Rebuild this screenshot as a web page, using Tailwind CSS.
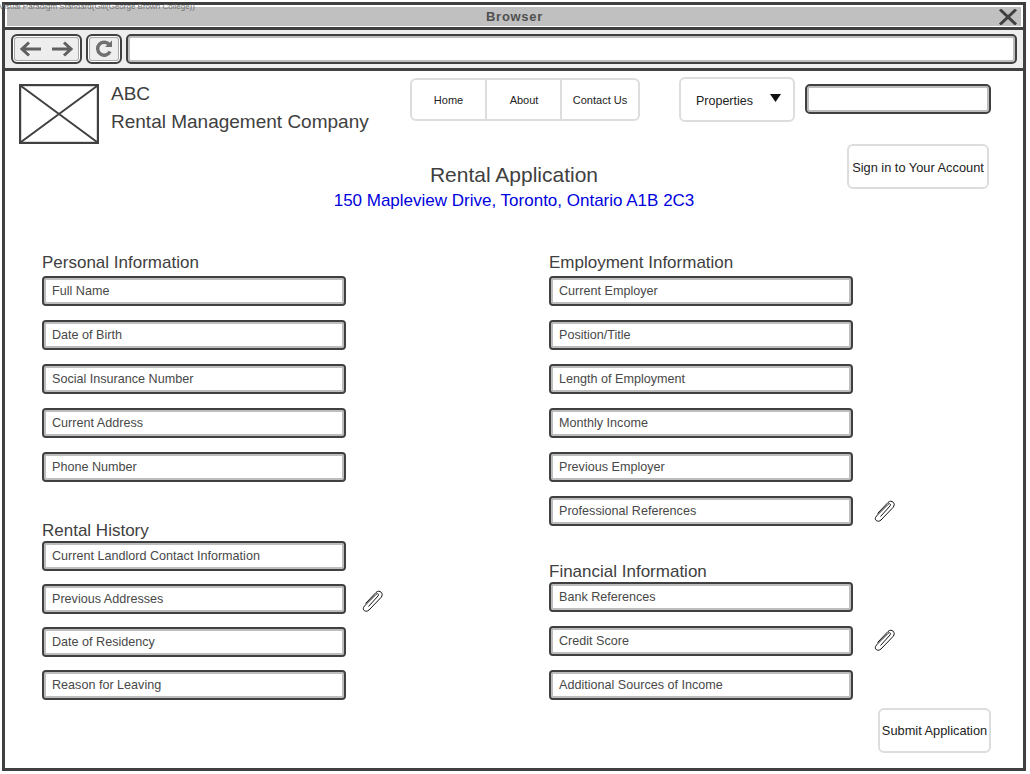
<!DOCTYPE html>
<html lang="en">
<head>
  <meta charset="UTF-8">
  <title>Rental Application</title>
  <script src="https://cdn.jsdelivr.net/npm/@tailwindcss/browser@4"></script>
</head>
<body class="bg-white font-['Liberation_Sans',sans-serif] text-[#404040]">
<div class="relative w-[1030px] h-[774px] overflow-hidden bg-white pl-[2px] pt-[2px]">
  <!-- Watermark -->
  <div class="absolute left-[-1px] top-[1px] text-[8px] leading-[11px] text-[#707070] whitespace-nowrap z-10">Visual Paradigm Standard(Gill(George Brown College))</div>

  <div class="w-[1024px] h-[769px] border-[3px] border-[#404040] flex flex-col">
    <!-- Title bar -->
    <div class="h-[22px] shrink-0 p-[2px] pb-[1px]">
      <div class="h-full bg-[#c0c0c0] flex items-center justify-between">
        <span class="flex-1 text-center text-[13px] font-bold text-[#505050] tracking-[0.7px] pl-[24px] pt-[1px]">Browser</span>
        <svg class="mr-[3px]" width="20" height="16" viewBox="0 0 20 16"><path d="M2 0.5 L18 15.5 M18 0.5 L2 15.5" stroke="#404040" stroke-width="3" fill="none"/></svg>
      </div>
    </div>
    <!-- Toolbar -->
    <div class="h-[44px] shrink-0 border-y-[3px] border-[#404040] bg-[#eeeeee] flex items-center pl-[6px] pr-[6px] gap-[4px]">
      <div class="w-[71px] h-[30px] rounded-[6px] border-2 border-[#404040] shadow-[inset_0_0_0_1px_#ffffff,inset_0_0_0_2px_#a8a8a8] flex items-center justify-center gap-[9px]">
        <svg width="22" height="16" viewBox="0 0 22 16"><path d="M21 8 H2 M9 1.5 L2 8 L9 14.5" stroke="#606060" stroke-width="3" fill="none"/></svg>
        <svg width="22" height="16" viewBox="0 0 22 16"><path d="M1 8 H20 M13 1.5 L20 8 L13 14.5" stroke="#606060" stroke-width="3" fill="none"/></svg>
      </div>
      <div class="w-[36px] h-[30px] rounded-[6px] border-2 border-[#404040] shadow-[inset_0_0_0_1px_#ffffff,inset_0_0_0_2px_#a8a8a8] flex items-center justify-center">
        <svg width="18" height="18" viewBox="0 0 18 18"><path d="M14.5 5 A6.5 6.5 0 1 0 15 11.5" stroke="#707070" stroke-width="3.4" fill="none"/><path d="M10 7 H17 V0.5 Z" fill="#707070"/></svg>
      </div>
      <div class="flex-1 h-[30px] rounded-[5px] border-2 border-[#404040] bg-white shadow-[inset_0_0_0_2px_#bdbdbd]"></div>
    </div>

    <!-- Page header -->
    <div class="flex items-start pl-[14px] h-[73px] shrink-0">
      <svg class="mt-[13px] shrink-0" width="80" height="60" viewBox="0 0 80 60"><rect x="1" y="1" width="78" height="58" fill="#fff" stroke="#404040" stroke-width="2.4"/><path d="M2 2 L78 58 M78 2 L2 58" stroke="#404040" stroke-width="2"/></svg>
      <div class="ml-[12px] w-[299px] mt-[9px] text-[19px] leading-[28px] whitespace-nowrap">
        <div>ABC</div>
        <div>Rental Management Company</div>
      </div>
      <nav class="mt-[7px] w-[230px] h-[43px] rounded-[6px] border-2 border-[#dddddd] flex text-[11px] text-[#222222]">
        <a class="w-[75px] border-r-2 border-[#dddddd] flex items-center justify-center pt-[1px]">Home</a>
        <a class="w-[75px] border-r-2 border-[#dddddd] flex items-center justify-center pt-[1px] pl-[1px]">About</a>
        <a class="flex-1 flex items-center justify-center pt-[1px]">Contact Us</a>
      </nav>
      <div class="ml-[39px] mt-[6px] w-[116px] h-[45px] rounded-[6px] border-2 border-[#dddddd] flex items-center pl-[15px] pt-[3px] text-[12.5px] text-[#222222]">
        Properties
        <svg class="ml-[17px] mb-[7px]" width="11" height="8" viewBox="0 0 11 8"><path d="M0 0 H11 L5.5 8 Z" fill="#111111"/></svg>
      </div>
      <div class="ml-[10px] mt-[13px] w-[186px] h-[30px] rounded-[5px] border-2 border-[#404040] bg-white shadow-[inset_0_0_0_2px_#bdbdbd]"></div>
    </div>

    <!-- Title -->
    <div class="grid grid-cols-[1fr_auto_1fr] h-[70px] shrink-0">
      <div></div>
      <div class="text-center pt-[18px]">
        <h1 class="text-[21px] leading-[26px]">Rental Application</h1>
        <p class="text-[17px] leading-[26px] text-[#0000dd]">150 Mapleview Drive, Toronto, Ontario A1B 2C3</p>
      </div>
      <div class="flex justify-end pr-[34px]">
        <button class="w-[142px] h-[45px] rounded-[6px] border-2 border-[#dddddd] pt-[2px] text-[12.8px] text-[#222222] whitespace-nowrap">Sign in to Your Account</button>
      </div>
    </div>

    <!-- Form columns -->
    <div class="flex pl-[37px] pt-[39px]">
      <div class="w-[507px] shrink-0">
        <h2 class="text-[17px] leading-[18px] h-[23px] pt-[1px]">Personal Information</h2>
        <div class="flex flex-col gap-[14px]">
          <div class="w-[304px] h-[30px] rounded-[4px] border-2 border-[#404040] shadow-[inset_0_0_0_2px_#bdbdbd] flex items-center pl-[8px] text-[12.6px] text-[#484848]">Full Name</div>
          <div class="w-[304px] h-[30px] rounded-[4px] border-2 border-[#404040] shadow-[inset_0_0_0_2px_#bdbdbd] flex items-center pl-[8px] text-[12.6px] text-[#484848]">Date of Birth</div>
          <div class="w-[304px] h-[30px] rounded-[4px] border-2 border-[#404040] shadow-[inset_0_0_0_2px_#bdbdbd] flex items-center pl-[8px] text-[12.6px] text-[#484848]">Social Insurance Number</div>
          <div class="w-[304px] h-[30px] rounded-[4px] border-2 border-[#404040] shadow-[inset_0_0_0_2px_#bdbdbd] flex items-center pl-[8px] text-[12.6px] text-[#484848]">Current Address</div>
          <div class="w-[304px] h-[30px] rounded-[4px] border-2 border-[#404040] shadow-[inset_0_0_0_2px_#bdbdbd] flex items-center pl-[8px] text-[12.6px] text-[#484848]">Phone Number</div>
        </div>
        <h2 class="mt-[38px] text-[17px] leading-[18px] h-[21px] pt-[2px]">Rental History</h2>
        <div class="flex flex-col gap-[13px]">
          <div class="w-[304px] h-[30px] rounded-[4px] border-2 border-[#404040] shadow-[inset_0_0_0_2px_#bdbdbd] flex items-center pl-[8px] text-[12.6px] text-[#484848]">Current Landlord Contact Information</div>
          <div class="flex items-center gap-[14px]">
            <div class="w-[304px] h-[30px] rounded-[4px] border-2 border-[#404040] shadow-[inset_0_0_0_2px_#bdbdbd] flex items-center pl-[8px] text-[12.6px] text-[#484848]">Previous Addresses</div>
            <svg class="mt-[4px]" width="24" height="22" viewBox="0 0 24 22"><path d="M8.5 16.5 L18 6 C19.5 4.2 17.5 2.8 16 4.4 L4.5 16 C1 20 6 23 9 20 L21 7.5 C24.5 3.5 19.5 -1 16 2.5 L5.5 13.5" stroke="#111" stroke-width="1" fill="none"/></svg>
          </div>
          <div class="w-[304px] h-[30px] rounded-[4px] border-2 border-[#404040] shadow-[inset_0_0_0_2px_#bdbdbd] flex items-center pl-[8px] text-[12.6px] text-[#484848]">Date of Residency</div>
          <div class="w-[304px] h-[30px] rounded-[4px] border-2 border-[#404040] shadow-[inset_0_0_0_2px_#bdbdbd] flex items-center pl-[8px] text-[12.6px] text-[#484848]">Reason for Leaving</div>
        </div>
      </div>
      <div class="flex-1">
        <h2 class="text-[17px] leading-[18px] h-[23px] pt-[1px]">Employment Information</h2>
        <div class="flex flex-col gap-[14px]">
          <div class="w-[304px] h-[30px] rounded-[4px] border-2 border-[#404040] shadow-[inset_0_0_0_2px_#bdbdbd] flex items-center pl-[8px] text-[12.6px] text-[#484848]">Current Employer</div>
          <div class="w-[304px] h-[30px] rounded-[4px] border-2 border-[#404040] shadow-[inset_0_0_0_2px_#bdbdbd] flex items-center pl-[8px] text-[12.6px] text-[#484848]">Position/Title</div>
          <div class="w-[304px] h-[30px] rounded-[4px] border-2 border-[#404040] shadow-[inset_0_0_0_2px_#bdbdbd] flex items-center pl-[8px] text-[12.6px] text-[#484848]">Length of Employment</div>
          <div class="w-[304px] h-[30px] rounded-[4px] border-2 border-[#404040] shadow-[inset_0_0_0_2px_#bdbdbd] flex items-center pl-[8px] text-[12.6px] text-[#484848]">Monthly Income</div>
          <div class="w-[304px] h-[30px] rounded-[4px] border-2 border-[#404040] shadow-[inset_0_0_0_2px_#bdbdbd] flex items-center pl-[8px] text-[12.6px] text-[#484848]">Previous Employer</div>
          <div class="flex items-center gap-[19px]">
            <div class="w-[304px] h-[30px] rounded-[4px] border-2 border-[#404040] shadow-[inset_0_0_0_2px_#bdbdbd] flex items-center pl-[8px] text-[12.6px] text-[#484848]">Professional References</div>
            <svg width="24" height="22" viewBox="0 0 24 22"><path d="M8.5 16.5 L18 6 C19.5 4.2 17.5 2.8 16 4.4 L4.5 16 C1 20 6 23 9 20 L21 7.5 C24.5 3.5 19.5 -1 16 2.5 L5.5 13.5" stroke="#111" stroke-width="1" fill="none"/></svg>
          </div>
        </div>
        <h2 class="mt-[35px] text-[17px] leading-[18px] h-[21px] pt-[2px]">Financial Information</h2>
        <div class="flex flex-col gap-[14px]">
          <div class="w-[304px] h-[30px] rounded-[4px] border-2 border-[#404040] shadow-[inset_0_0_0_2px_#bdbdbd] flex items-center pl-[8px] text-[12.6px] text-[#484848]">Bank References</div>
          <div class="flex items-center gap-[19px]">
            <div class="w-[304px] h-[30px] rounded-[4px] border-2 border-[#404040] shadow-[inset_0_0_0_2px_#bdbdbd] flex items-center pl-[8px] text-[12.6px] text-[#484848]">Credit Score</div>
            <svg class="mb-[2px]" width="24" height="22" viewBox="0 0 24 22"><path d="M8.5 16.5 L18 6 C19.5 4.2 17.5 2.8 16 4.4 L4.5 16 C1 20 6 23 9 20 L21 7.5 C24.5 3.5 19.5 -1 16 2.5 L5.5 13.5" stroke="#111" stroke-width="1" fill="none"/></svg>
          </div>
          <div class="w-[304px] h-[30px] rounded-[4px] border-2 border-[#404040] shadow-[inset_0_0_0_2px_#bdbdbd] flex items-center pl-[8px] text-[12.6px] text-[#484848]">Additional Sources of Income</div>
        </div>
      </div>
    </div>
    <!-- Submit -->
    <div class="flex justify-end pr-[32px] mt-[8px]">
      <button class="w-[113px] h-[45px] rounded-[6px] border-2 border-[#dddddd] text-[12.8px] text-[#222222] whitespace-nowrap">Submit Application</button>
    </div>
  </div>
</div>
</body>
</html>
